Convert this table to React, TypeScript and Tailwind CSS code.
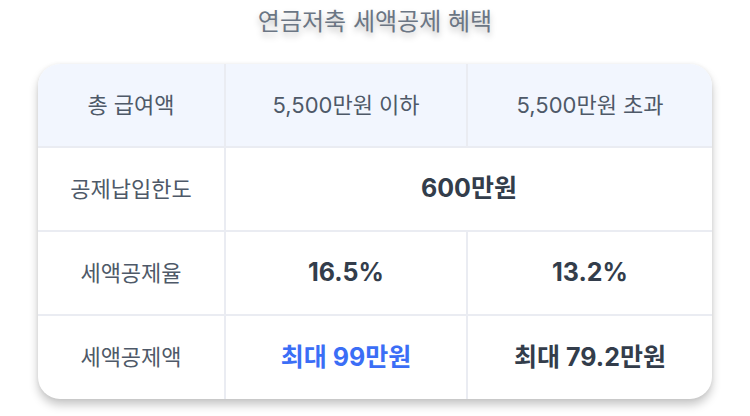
export default function App() {
  const font = { fontFamily: 'Inter, "Noto Sans CJK KR", sans-serif' };
  const cell = "flex items-center justify-center";
  return (
    <div className="w-[750px] h-[416px] bg-white flex flex-col items-center" style={font}>
      <div className="h-[44px] flex items-center text-[24px] text-[#6b7684] [text-shadow:0_4px_6px_rgba(0,0,0,0.25)]">
        연금저축 세액공제 혜택
      </div>
      <div className="mt-[20px] w-[674px] rounded-[22px] bg-white overflow-hidden shadow-[0_6px_10px_rgba(0,0,0,0.22),0_0_4px_rgba(0,0,0,0.06)]">
        <div className="grid grid-cols-[188px_242px_1fr] h-[84px] bg-[#f2f6fe] border-b-2 border-[#eaecf2] text-[22px] text-[#4e5968]">
          <div className={`${cell} border-r-2 border-[#eaecf2]`}>총 급여액</div>
          <div className={`${cell} border-r-2 border-[#eaecf2]`}>5,500만원 이하</div>
          <div className={cell}>5,500만원 초과</div>
        </div>
        <div className="grid grid-cols-[188px_1fr] h-[84px] border-b-2 border-[#eaecf2]">
          <div className={`${cell} border-r-2 border-[#eaecf2] text-[22px] text-[#4e5968]`}>공제납입한도</div>
          <div className={`${cell} text-[25px] font-bold text-[#333d4b]`}>600만원</div>
        </div>
        <div className="grid grid-cols-[188px_242px_1fr] h-[84px] border-b-2 border-[#eaecf2]">
          <div className={`${cell} border-r-2 border-[#eaecf2] text-[22px] text-[#4e5968]`}>세액공제율</div>
          <div className={`${cell} border-r-2 border-[#eaecf2] text-[25px] font-bold text-[#333d4b]`}>16.5%</div>
          <div className={`${cell} text-[25px] font-bold text-[#333d4b]`}>13.2%</div>
        </div>
        <div className="grid grid-cols-[188px_242px_1fr] h-[83px]">
          <div className={`${cell} border-r-2 border-[#eaecf2] text-[22px] text-[#4e5968]`}>세액공제액</div>
          <div className={`${cell} border-r-2 border-[#eaecf2] text-[25px] font-bold text-[#3b6ef6]`}>최대 99만원</div>
          <div className={`${cell} text-[25px] font-bold text-[#333d4b]`}>최대 79.2만원</div>
        </div>
      </div>
    </div>
  );
}
